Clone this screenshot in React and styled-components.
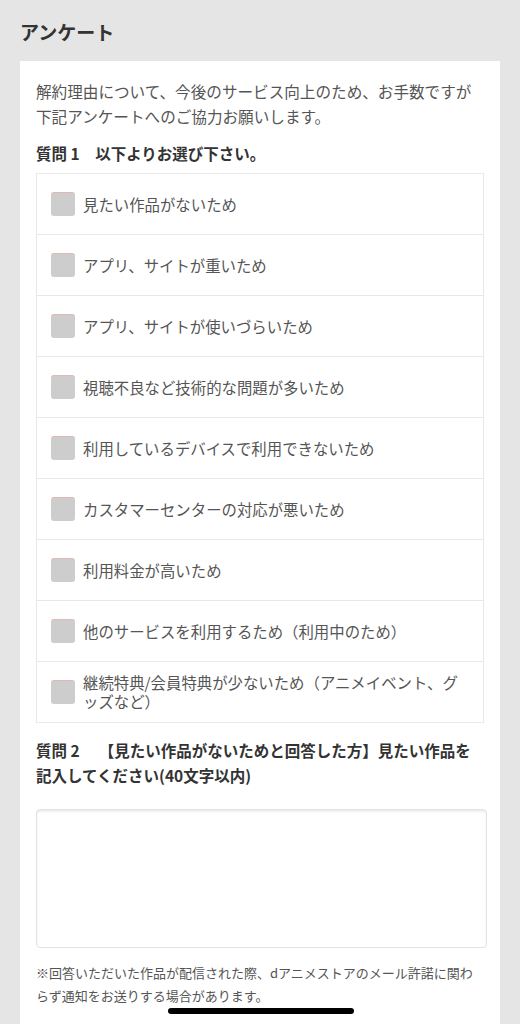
import React from 'react';
import styled, {createGlobalStyle} from 'styled-components';

const options = [
  '見たい作品がないため',
  'アプリ、サイトが重いため',
  'アプリ、サイトが使いづらいため',
  '視聴不良など技術的な問題が多いため',
  '利用しているデバイスで利用できないため',
  'カスタマーセンターの対応が悪いため',
  '利用料金が高いため',
  '他のサービスを利用するため（利用中のため）',
  '継続特典/会員特典が少ないため（アニメイベント、グッズなど）',
];

function App() {
  return (
    <ScPage>
      <GlobalStyle />
      <ScTitle>アンケート</ScTitle>
      <ScCard>
        <ScIntro>
          解約理由について、今後のサービス向上のため、お手数ですが
          <br />
          下記アンケートへのご協力お願いします。
        </ScIntro>
        <ScQuestion>質問 1　以下よりお選び下さい。</ScQuestion>
        <ScOptionList>
          {options.map(label => (
            <ScOption key={label}>
              <ScCheck type="checkbox" />
              <ScLabel>{label}</ScLabel>
            </ScOption>
          ))}
        </ScOptionList>
        <ScQuestion $top={15}>
          質問 2　 【見たい作品がないためと回答した方】見たい作品を記入してください(40文字以内)
        </ScQuestion>
        <ScTextArea maxLength={40} />
        <ScNote>
          ※回答いただいた作品が配信された際、dアニメストアのメール許諾に関わらず通知をお送りする場合があります。
        </ScNote>
      </ScCard>
      <ScHomeBar />
    </ScPage>
  );
}

const GlobalStyle = createGlobalStyle`
  body {
    margin: 0;
    background: #e5e5e5;
    font-family: "Noto Sans CJK JP", "Noto Sans", sans-serif;
  }
`;

const ScPage = styled.div`
  position: relative;
  width: 520px;
  height: 1024px;
  overflow: hidden;
  background: #e5e5e5;
  padding: 17px 20px 0;
  box-sizing: border-box;
  display: flex;
  flex-direction: column;
`;

const ScTitle = styled.h1`
  margin: 0 0 14px;
  font-size: 19px;
  line-height: 30px;
  font-weight: 700;
  color: #333;
`;

const ScCard = styled.div`
  flex: 1;
  background: #fff;
  padding: 18px 16px 0 16px;
`;

const ScIntro = styled.p`
  margin: 0;
  font-size: 15.6px;
  line-height: 25px;
  color: #555;
  white-space: nowrap;
`;

const ScQuestion = styled.p`
  margin: ${props => props.$top || 12}px 0 7px;
  font-size: 15.5px;
  line-height: 25px;
  font-weight: 700;
  color: #333;
`;

const ScOptionList = styled.div`
  width: 448px;
  border: 1px solid #e8e8e8;
  box-sizing: border-box;
`;

const ScOption = styled.label`
  display: flex;
  align-items: center;
  gap: 8px;
  height: 61px;
  padding: 0 20px 0 14px;
  box-sizing: border-box;
  border-bottom: 1px solid #e8e8e8;

  &:last-child {
    border-bottom: none;
    height: 60px;
  }
`;

const ScCheck = styled.input`
  appearance: none;
  flex: none;
  width: 24px;
  height: 24px;
  margin: 0;
  border-radius: 3px;
  background: #cdcdcd;
  border-top: 1px solid #e4b8b2;
  box-sizing: border-box;
`;

const ScLabel = styled.span`
  font-size: 15.4px;
  line-height: 19px;
  color: #555;
`;

const ScTextArea = styled.textarea`
  display: block;
  width: 451px;
  height: 139px;
  margin-top: 21px;
  border: 1px solid #e3e3e3;
  border-radius: 4px;
  box-shadow: inset 0 2px 2px rgba(0, 0, 0, 0.08);
  box-sizing: border-box;
  resize: none;
  background: #fff;
`;

const ScNote = styled.p`
  margin: 13px 0 0;
  font-size: 13px;
  line-height: 23px;
  color: #555;
`;

const ScHomeBar = styled.div`
  position: absolute;
  left: 168px;
  bottom: 10px;
  width: 186px;
  height: 6px;
  border-radius: 3px;
  background: #000;
`;

export default App;
